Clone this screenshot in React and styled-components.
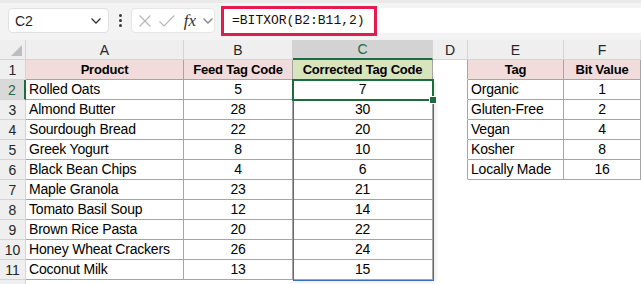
import React from 'react'
import styled, { createGlobalStyle } from 'styled-components'

const GlobalStyle = createGlobalStyle`
  html, body {
    margin: 0;
    padding: 0;
    background: #ffffff;
  }
  body {
    font-family: "Liberation Sans", Arial, sans-serif;
    width: 641px;
    height: 284px;
    overflow: hidden;
  }
`

const COLS = [
  { key: 'A', width: 158 },
  { key: 'B', width: 109 },
  { key: 'C', width: 140 },
  { key: 'D', width: 35 },
  { key: 'E', width: 96 },
  { key: 'F', width: 77 },
]

const products = [
  ['Rolled Oats', 5, 7],
  ['Almond Butter', 28, 30],
  ['Sourdough Bread', 22, 20],
  ['Greek Yogurt', 8, 10],
  ['Black Bean Chips', 4, 6],
  ['Maple Granola', 23, 21],
  ['Tomato Basil Soup', 12, 14],
  ['Brown Rice Pasta', 20, 22],
  ['Honey Wheat Crackers', 26, 24],
  ['Coconut Milk', 13, 15],
]

const tags = [
  ['Organic', 1],
  ['Gluten-Free', 2],
  ['Vegan', 4],
  ['Kosher', 8],
  ['Locally Made', 16],
]

const Page = styled.div`
  width: 641px;
  height: 284px;
  display: flex;
  flex-direction: column;
  overflow: hidden;
`

const Toolbar = styled.div`
  flex: 0 0 40px;
  height: 40px;
  box-sizing: border-box;
  background: #f3f3f3;
  border-top: 3px solid #e9e9e9;
  display: flex;
  align-items: center;
  padding: 1px 0 3px 8px;
`

const NameBox = styled.div`
  width: 101px;
  height: 25px;
  box-sizing: border-box;
  background: #fff;
  border: 1px solid #e1e1e1;
  border-radius: 4px;
  display: flex;
  align-items: center;
  justify-content: space-between;
  padding: 0 6px 0 6px;
  font-size: 14px;
  color: #1f1f1f;
`

const Dots = styled.div`
  width: 22px;
  display: flex;
  flex-direction: column;
  align-items: center;
  gap: 2px;
  span {
    width: 3px;
    height: 3px;
    border-radius: 50%;
    background: #3a3a3a;
  }
`

const FxGroup = styled.div`
  width: 84px;
  height: 25px;
  box-sizing: border-box;
  background: #fff;
  border: 1px solid #e6e6e6;
  border-radius: 4px;
  display: flex;
  align-items: center;
  padding: 0 0 0 6px;
  gap: 6px;
`

const Fx = styled.span`
  font-family: "Liberation Serif", "DejaVu Serif", serif;
  font-style: italic;
  font-size: 17px;
  color: #333;
  margin-left: 2px;
`

const FormulaField = styled.div`
  flex: 1;
  margin-left: 7px;
  height: 25px;
  background: #fff;
  display: flex;
  align-items: center;
`

const Highlight = styled.div`
  width: 156px;
  height: 30px;
  margin-left: -1px;
  box-sizing: border-box;
  border: 3px solid #e31b4f;
  display: flex;
  align-items: center;
  padding-left: 8px;
  font-family: "Liberation Mono", "DejaVu Sans Mono", monospace;
  font-size: 13px;
  color: #111;
`

const SheetWrap = styled.div`
  position: relative;
  flex: 0 0 auto;
`

const Sheet = styled.div`
  display: grid;
  grid-template-columns: 26px ${COLS.map((c) => c.width + 'px').join(' ')};
  grid-auto-rows: 20px;
`

const Corner = styled.div`
  background: #efefef;
  border-right: 1px solid #d4d4d4;
  border-bottom: 1px solid #d4d4d4;
  box-sizing: border-box;
  position: relative;
  &::after {
    content: '';
    position: absolute;
    right: 3px;
    bottom: 3px;
    width: 0;
    height: 0;
    border-left: 11px solid transparent;
    border-bottom: 11px solid #bdbdbd;
  }
`

const ColHead = styled.div`
  box-sizing: border-box;
  background: ${(p) => (p.$active ? '#d3d3d3' : '#efefef')};
  border-right: 1px solid #d4d4d4;
  border-bottom: ${(p) => (p.$active ? '2px solid #1e6b3f' : '1px solid #d4d4d4')};
  color: ${(p) => (p.$active ? '#1e6b3f' : '#262626')};
  font-size: 14px;
  display: flex;
  align-items: center;
  justify-content: center;
`

const RowHead = styled.div`
  box-sizing: border-box;
  background: ${(p) => (p.$active ? '#d9d9d9' : '#efefef')};
  border-right: ${(p) => (p.$active ? '2px solid #1e6b3f' : '1px solid #d4d4d4')};
  border-bottom: 1px solid #d4d4d4;
  color: ${(p) => (p.$active ? '#1e6b3f' : '#262626')};
  font-size: 14px;
  display: flex;
  align-items: center;
  justify-content: center;
`

const fills = {
  pink: '#f2dcdb',
  green: '#d8e4bc',
}

const Cell = styled.div`
  box-sizing: border-box;
  background: ${(p) => fills[p.$fill] || '#fff'};
  border-right: ${(p) => (p.$grid || p.$edge ? '1px solid #a5a5a5' : '1px solid transparent')};
  border-bottom: ${(p) => (p.$grid ? '1px solid #a5a5a5' : '1px solid transparent')};
  font-size: ${(p) => (p.$bold ? '13px' : '14px')};
  font-weight: ${(p) => (p.$bold ? 700 : 400)};
  color: #000;
  line-height: 19px;
  padding: 0 3px;
  white-space: nowrap;
  text-align: ${(p) => (p.$center ? 'center' : 'left')};
  letter-spacing: -0.2px;
`

const Spill = styled.div`
  position: absolute;
  pointer-events: none;
  box-sizing: border-box;
  border: 1px solid #3c6ec4;
  box-shadow: 2px 2px 3px rgba(0, 0, 0, 0.08);
`

const Active = styled.div`
  position: absolute;
  pointer-events: none;
  box-sizing: border-box;
  border: 2px solid #1e6b3f;
  &::after {
    content: '';
    position: absolute;
    right: -5px;
    bottom: -5px;
    width: 6px;
    height: 6px;
    background: #1e6b3f;
    border: 1px solid #fff;
  }
`

function Chevron({ color = '#333' }) {
  return (
    <svg width="12" height="8" viewBox="0 0 12 8">
      <path d="M1.5 1.5 L6 6 L10.5 1.5" fill="none" stroke={color} strokeWidth="1.3" />
    </svg>
  )
}

function FormulaBar() {
  return (
    <Toolbar>
      <NameBox>
        <span>C2</span>
        <Chevron />
      </NameBox>
      <Dots>
        <span />
        <span />
        <span />
      </Dots>
      <FxGroup>
        <svg width="14" height="14" viewBox="0 0 14 14">
          <path d="M1.5 1.5 L12.5 12.5 M12.5 1.5 L1.5 12.5" stroke="#b8b8b8" strokeWidth="1.2" />
        </svg>
        <svg width="18" height="14" viewBox="0 0 18 14">
          <path d="M1.5 7.5 L6 12 L16.5 1.5" fill="none" stroke="#b8b8b8" strokeWidth="1.2" />
        </svg>
        <Fx>fx</Fx>
        <Chevron color="#888" />
      </FxGroup>
      <FormulaField>
        <Highlight>=BITXOR(B2:B11,2)</Highlight>
      </FormulaField>
    </Toolbar>
  )
}

function rowCells(r) {
  const cells = []
  const inMain = r >= 1 && r <= 11
  const inTag = r >= 1 && r <= 6
  if (r === 1) {
    cells.push(<Cell key="A" $grid $fill="pink" $bold $center>Product</Cell>)
    cells.push(<Cell key="B" $grid $fill="pink" $bold $center>Feed Tag Code</Cell>)
    cells.push(<Cell key="C" $grid $fill="green" $bold $center>Corrected Tag Code</Cell>)
  } else if (inMain) {
    const p = products[r - 2]
    cells.push(<Cell key="A" $grid>{p[0]}</Cell>)
    cells.push(<Cell key="B" $grid $center>{p[1]}</Cell>)
    cells.push(<Cell key="C" $grid $center>{p[2]}</Cell>)
  } else {
    cells.push(<Cell key="A" />, <Cell key="B" />, <Cell key="C" />)
  }
  cells.push(<Cell key="D" $edge={inTag} />)
  if (r === 1) {
    cells.push(<Cell key="E" $grid $fill="pink" $bold $center>Tag</Cell>)
    cells.push(<Cell key="F" $grid $fill="pink" $bold $center>Bit Value</Cell>)
  } else if (inTag) {
    const t = tags[r - 2]
    cells.push(<Cell key="E" $grid>{t[0]}</Cell>)
    cells.push(<Cell key="F" $grid $center>{t[1]}</Cell>)
  } else {
    cells.push(<Cell key="E" />, <Cell key="F" />)
  }
  return cells
}

export default function App() {
  const rows = Array.from({ length: 11 }, (_, i) => i + 1)
  return (
    <Page>
      <GlobalStyle />
      <FormulaBar />
      <SheetWrap>
        <Sheet>
          <Corner />
          {COLS.map((c) => (
            <ColHead key={c.key} $active={c.key === 'C'}>
              {c.key}
            </ColHead>
          ))}
          {rows.map((r) => (
            <React.Fragment key={r}>
              <RowHead $active={r === 2}>{r}</RowHead>
              {rowCells(r)}
            </React.Fragment>
          ))}
          <RowHead />
        </Sheet>
        <Spill style={{ left: 293, top: 39, width: 141, height: 202 }} />
        <Active style={{ left: 292, top: 39, width: 142, height: 22 }} />
      </SheetWrap>
    </Page>
  )
}
